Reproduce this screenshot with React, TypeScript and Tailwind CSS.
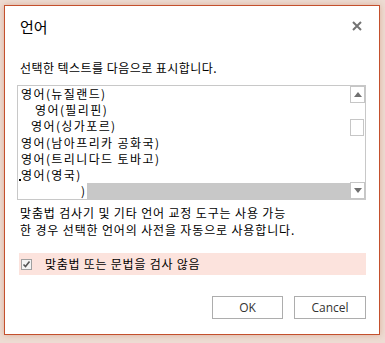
import React from "react";

const kr = { fontFamily: '"Noto Sans CJK KR", "Noto Sans", sans-serif' };
const ui = { fontFamily: '"Open Sans", "Liberation Sans", sans-serif' };

function Row({ children, indent = 0 }: { children: React.ReactNode; indent?: number }) {
  return (
    <div className="h-[16.3px] leading-[16px] text-[12px] tracking-[1.4px] text-black whitespace-nowrap" style={{ paddingLeft: 3 + indent }}>
      {children}
    </div>
  );
}

export default function App() {
  return (
    <div className="w-[385px] h-[343px] bg-[#eddcd3] pt-[5px] pl-[4px]" style={kr}>
      <div className="w-[376px] h-[330px] border border-[#c4502d] bg-white flex flex-col shadow-[0_0_6px_rgba(190,90,50,0.35)]">
        <div className="h-[54px] flex items-start justify-between pl-[15px] pr-[17px] pt-[11px]">
          <div className="text-[15px] leading-[20px] text-black">언어</div>
          <svg width="10" height="10" viewBox="0 0 10 10" className="mt-[4px]">
            <path d="M1 1 L9 9 M9 1 L1 9" stroke="#737373" strokeWidth="2" />
          </svg>
        </div>
        <div className="pl-[15px] text-[12px] leading-[16px] tracking-[0.45px] text-black">선택한 텍스트를 다음으로 표시합니다.</div>
        <div className="ml-[12px] mt-[9px] w-[349px] h-[115px] border border-[#c8c8c8] flex">
          <div className="flex-1 flex flex-col relative">
            <Row>영어(뉴질랜드)</Row>
            <Row indent={14}>영어(필리핀)</Row>
            <Row indent={10}>영어(싱가포르)</Row>
            <Row>영어(남아프리카 공화국)</Row>
            <Row>영어(트리니다드 토바고)</Row>
            <Row>
              <span className="relative">
                <span className="absolute left-[-2px] bottom-[2px] w-[2px] h-[2px] bg-black" />
                영어(영국)
              </span>
            </Row>
            <div className="flex h-[16px] text-[12px] leading-[16px]">
              <div className="w-[69px] text-right pr-[2px] text-black">)</div>
              <div className="flex-1 bg-[#c8c8c8]" />
            </div>
          </div>
          <div className="w-[15px] flex flex-col justify-between">
            <div className="h-[17px] border border-[#c6c6c6] bg-white flex items-center justify-center">
              <svg width="8" height="5" viewBox="0 0 8 5"><path d="M0 5 L4 0 L8 5 Z" fill="#707070" /></svg>
            </div>
            <div className="flex-1 flex flex-col">
              <div className="mt-[16px] h-[17px] w-[14px] border border-[#c6c6c6] bg-white" />
            </div>
            <div className="h-[17px] border border-[#c6c6c6] bg-white flex items-center justify-center">
              <svg width="8" height="5" viewBox="0 0 8 5"><path d="M0 0 L8 0 L4 5 Z" fill="#707070" /></svg>
            </div>
          </div>
        </div>
        <div className="pl-[15px] mt-[4px] text-[12px] leading-[17px] tracking-[0.85px] text-black">
          <div>맞춤법 검사기 및 기타 언어 교정 도구는 사용 가능</div>
          <div>한 경우 선택한 언어의 사전을 자동으로 사용합니다.</div>
        </div>
        <div className="ml-[14px] mt-[15px] w-[347px] h-[22px] bg-[#fce3dd] flex items-center pl-[2px]">
          <div className="w-[11px] h-[11px] border border-[#a0a0a0] bg-[#f4f4f4] flex items-center justify-center">
            <svg width="9" height="9" viewBox="0 0 9 9"><path d="M1.5 4.5 L3.5 6.5 L7.5 1.5" stroke="#555" strokeWidth="1.6" fill="none" /></svg>
          </div>
          <div className="ml-[13px] text-[12px] leading-[16px] tracking-[0.75px] text-black">맞춤법 또는 문법을 검사 않음</div>
        </div>
        <div className="flex justify-end gap-[11px] pr-[13px] mt-[21px]">
          <button className="w-[71px] h-[23px] border border-[#adadad] bg-white text-[12px] text-[#333]" style={ui}>OK</button>
          <button className="w-[72px] h-[23px] border border-[#adadad] bg-white text-[12px] text-[#333]" style={ui}>Cancel</button>
        </div>
      </div>
    </div>
  );
}
